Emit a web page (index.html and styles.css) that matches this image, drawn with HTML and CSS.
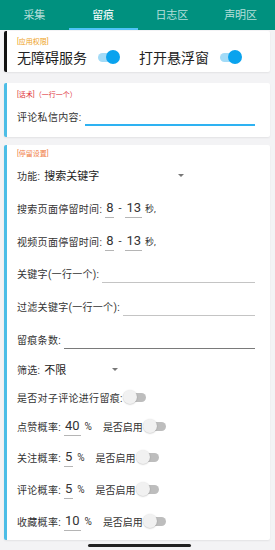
FILE: index.html
```html
<!DOCTYPE html>
<html lang="zh">
<head>
<meta charset="utf-8">
<link rel="stylesheet" href="styles.css">
</head>
<body>
<nav class="tabs">
  <div class="tab">采集</div>
  <div class="tab active">留痕</div>
  <div class="tab">日志区</div>
  <div class="tab">声明区</div>
</nav>
<main class="content">
  <section class="card card-perm">
    <div class="tag tag-yellow">[应用权限]</div>
    <div class="perm-row">
      <span class="perm-label">无障碍服务</span>
      <span class="switch on"></span>
      <span class="perm-label second">打开悬浮窗</span>
      <span class="switch on"></span>
    </div>
  </section>

  <section class="card card-script">
    <div class="tag tag-red">[话术]（一行一个）</div>
    <div class="row">
      <span class="label">评论私信内容:</span>
      <span class="line-input focused"></span>
    </div>
  </section>

  <section class="card card-stay">
    <div class="tag tag-orange">[停留设置]</div>
    <div class="row">
      <span class="label">功能:</span>
      <span class="select wide"><span class="select-value">搜索关键字</span><span class="arrow"></span></span>
    </div>
    <div class="row loose">
      <span class="label">搜索页面停留时间:</span>
      <span class="num">8</span><span class="dash">-</span><span class="num">13</span><span class="unit">秒,</span>
    </div>
    <div class="row">
      <span class="label">视频页面停留时间:</span>
      <span class="num">8</span><span class="dash">-</span><span class="num">13</span><span class="unit">秒,</span>
    </div>
    <div class="row">
      <span class="label">关键字(一行一个):</span>
      <span class="line-input"></span>
    </div>
    <div class="row loose">
      <span class="label">过滤关键字(一行一个):</span>
      <span class="line-input"></span>
    </div>
    <div class="row">
      <span class="label">留痕条数:</span>
      <span class="line-input dark"></span>
    </div>
    <div class="row tight">
      <span class="label">筛选:</span>
      <span class="select narrow"><span class="select-value">不限</span><span class="arrow"></span></span>
    </div>
    <div class="row tight">
      <span class="label">是否对子评论进行留痕:</span>
      <span class="switch"></span>
    </div>
    <div class="row snug">
      <span class="label">点赞概率:</span>
      <span class="num">40</span><span class="pct">%</span><span class="enable">是否启用</span>
      <span class="switch"></span>
    </div>
    <div class="row">
      <span class="label">关注概率:</span>
      <span class="num">5</span><span class="pct">%</span><span class="enable">是否启用</span>
      <span class="switch"></span>
    </div>
    <div class="row">
      <span class="label">评论概率:</span>
      <span class="num">5</span><span class="pct">%</span><span class="enable">是否启用</span>
      <span class="switch"></span>
    </div>
    <div class="row">
      <span class="label">收藏概率:</span>
      <span class="num">10</span><span class="pct">%</span><span class="enable">是否启用</span>
      <span class="switch"></span>
    </div>
  </section>
  <div class="gesture-bar"></div>
</main>
</body>
</html>
```

FILE: styles.css
```css
* { box-sizing: border-box; }

html, body {
  margin: 0;
  padding: 0;
}

body {
  width: 275px;
  height: 550px;
  overflow: hidden;
  background: #f3f3f5;
  font-family: "Roboto", "Noto Sans CJK SC", sans-serif;
  color: #333;
}

.tabs {
  display: flex;
  height: 30px;
  background: #00917f;
}

.tab {
  flex: 1;
  display: flex;
  align-items: center;
  justify-content: center;
  font-size: 11px;
  color: rgba(255, 255, 255, 0.72);
  border-bottom: 2px solid transparent;
}

.tab.active {
  color: #fff;
  border-bottom-color: #4fc3f7;
}

.content {
  display: flex;
  flex-direction: column;
  padding: 1px 5px 0 4px;
}

.card {
  background: #fff;
  border-left: 3px solid #4cbde6;
  border-radius: 2px;
  box-shadow: 0 1px 2px rgba(0, 0, 0, 0.07);
  padding: 0 15px 0 10px;
}

.card-perm {
  border-left-color: #111;
  padding-top: 6px;
  padding-bottom: 5px;
  margin-bottom: 11px;
}

.card-script {
  padding-top: 7px;
  padding-bottom: 5px;
  margin-bottom: 8px;
}

.card-stay {
  padding-top: 4px;
  padding-bottom: 3px;
}

.tag {
  font-size: 7px;
  line-height: 10px;
  height: 10px;
}

.tag-yellow { color: #eea21b; }
.tag-red { color: #e0343a; }
.tag-orange { color: #f07c45; }

.perm-row {
  display: flex;
  align-items: center;
  height: 20px;
}

.perm-label {
  font-size: 14px;
  color: #222;
  margin-right: 9px;
}

.perm-label.second {
  margin-left: 19px;
}

/* switches */
.switch {
  position: relative;
  display: inline-block;
  flex: none;
  width: 24px;
  height: 14px;
}

.switch::before {
  content: "";
  position: absolute;
  left: 2px;
  right: 1px;
  top: 2.5px;
  height: 9px;
  border-radius: 5px;
  background: #bdbdbd;
}

.switch::after {
  content: "";
  position: absolute;
  left: 0;
  top: 0;
  width: 14px;
  height: 14px;
  border-radius: 50%;
  background: #f1f1f1;
  box-shadow: 0 0.5px 1.5px rgba(0, 0, 0, 0.25);
}

.switch.on::before {
  background: #a3dbf7;
}

.switch.on::after {
  left: 10px;
  background: #0aa3ee;
  box-shadow: none;
}

/* rows */
.row {
  display: flex;
  align-items: center;
  height: 32px;
  font-size: 10px;
}

.row.loose { height: 34px; }
.row.snug { height: 30px; }
.row.tight { height: 28px; }

.label {
  white-space: nowrap;
  letter-spacing: 0.3px;
}

.label + .num {
  margin-left: 3px;
}

.line-input {
  flex: 1;
  height: 19px;
  margin-left: 3px;
  border-bottom: 1px solid #c4c4c4;
}

.line-input.dark {
  border-bottom-color: #7a7a7a;
}

.line-input.focused {
  height: 20px;
  border-bottom: 2px solid #2eb2f2;
}

.num {
  font-size: 13px;
  line-height: 14px;
  padding: 2px 1px;
  color: #333;
  border-bottom: 1px solid #b5b5b5;
}

.dash {
  font-size: 11px;
  margin: 0 4px;
}

.unit {
  margin-left: 3px;
  font-size: 9px;
}

.pct {
  margin-left: 4px;
  font-size: 10px;
}

.enable {
  margin-left: 11px;
  margin-right: 0;
}

.select {
  display: flex;
  align-items: center;
  margin-left: 4px;
}

.select.wide { width: 143px; }
.select.narrow { width: 77px; }

.select-value {
  font-size: 11px;
  color: #222;
}

.arrow {
  margin-left: auto;
  margin-right: 3px;
  width: 0;
  height: 0;
  border-left: 3px solid transparent;
  border-right: 3px solid transparent;
  border-top: 3px solid #777;
}

.gesture-bar {
  align-self: center;
  width: 103px;
  height: 3px;
  margin-top: 4px;
  margin-left: 4px;
  border-radius: 2px;
  background: #222;
}
```
